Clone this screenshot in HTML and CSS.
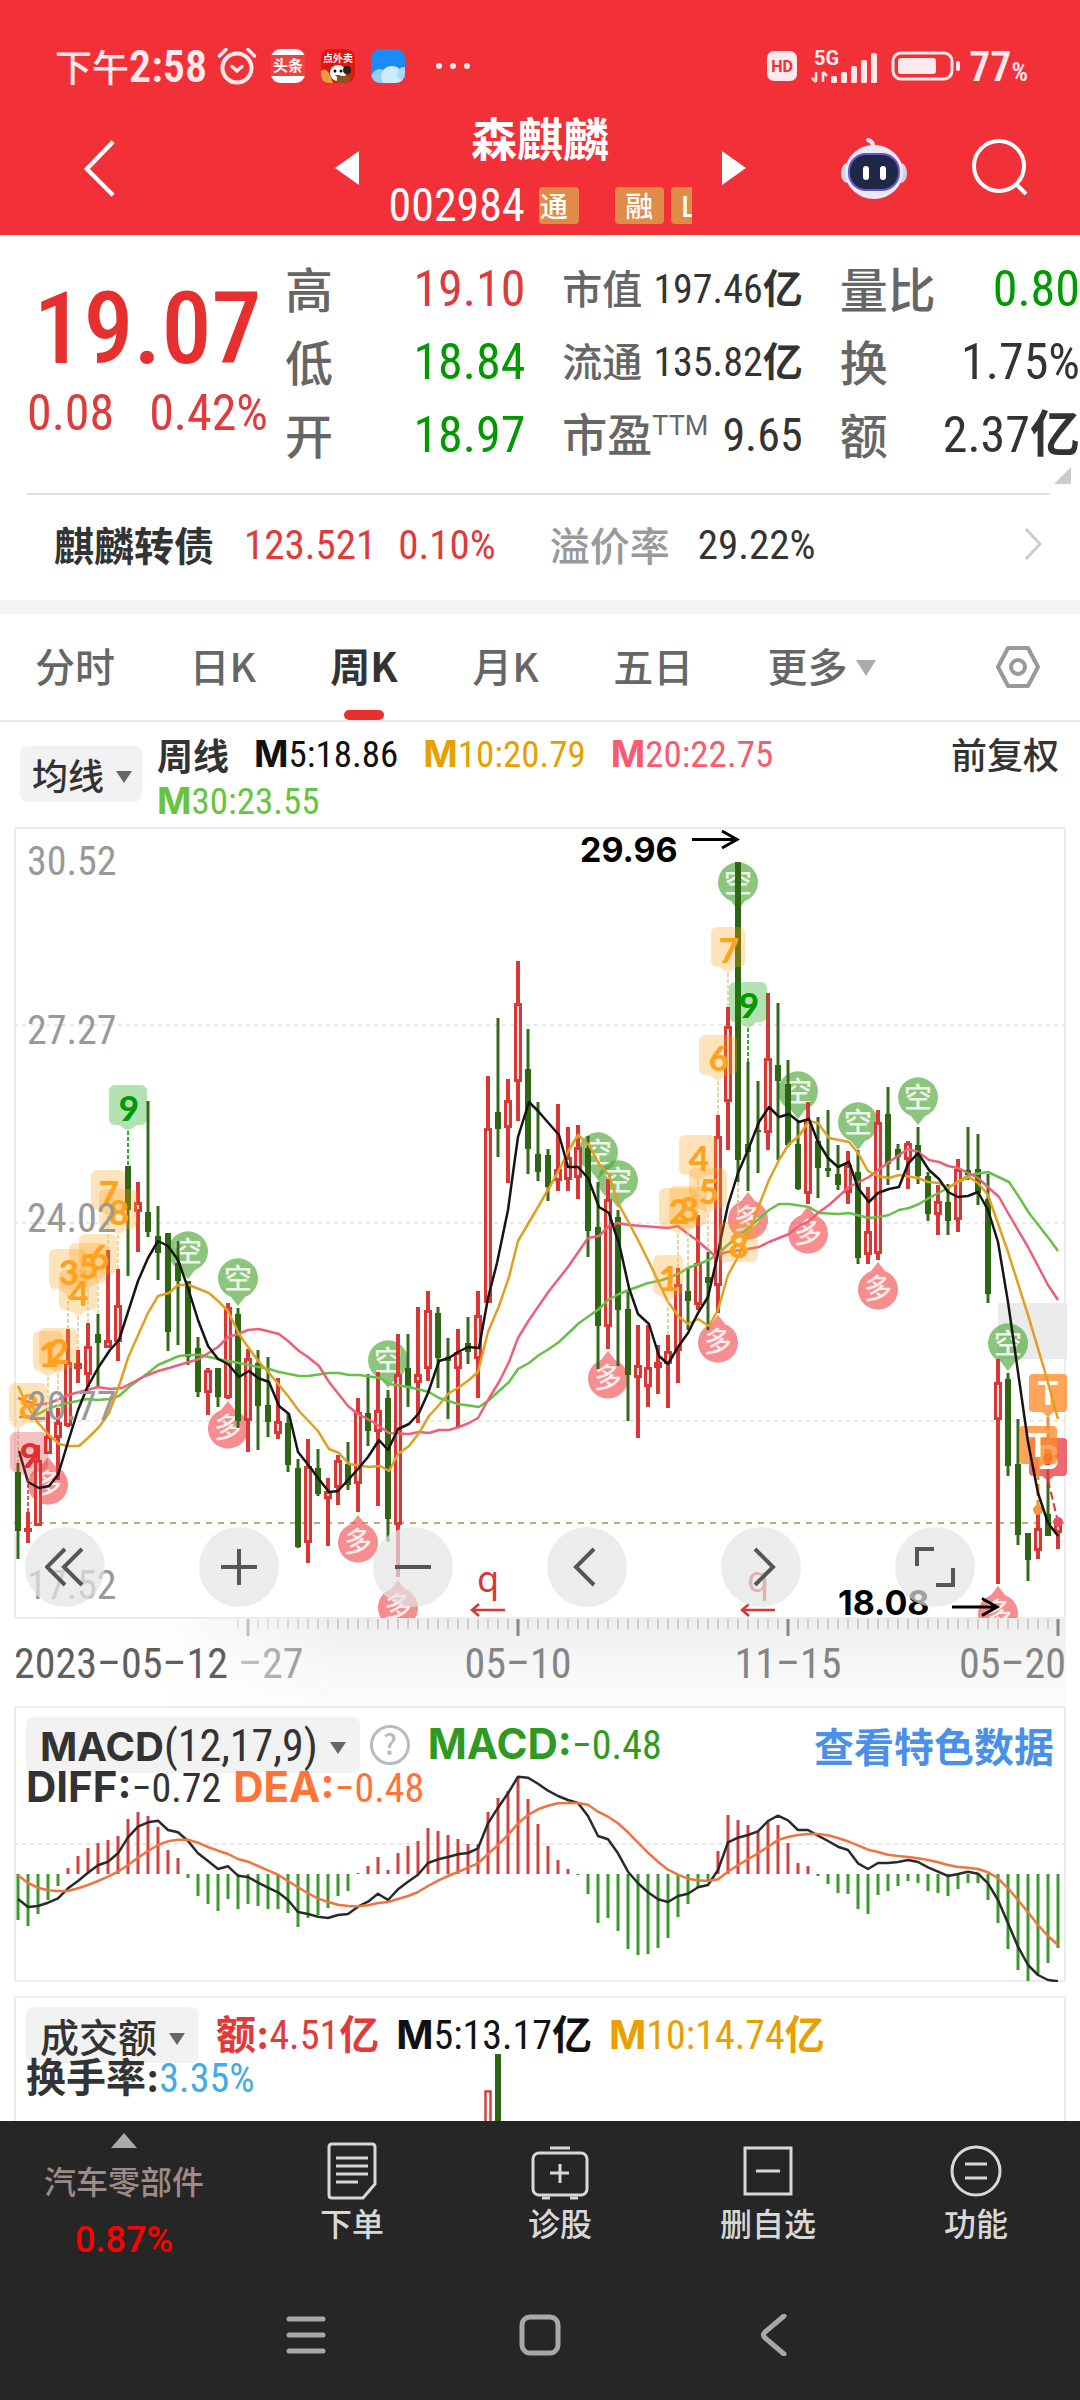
FILE: index.html
```html
<!DOCTYPE html>
<html lang="zh-CN">
<head>
<meta charset="utf-8">
<meta name="viewport" content="width=device-width, initial-scale=1">
<title>森麒麟 002984</title>
<link rel="stylesheet" href="styles.css">
</head>
<body>
<div class="app">
  <header class="top">
    <div class="status">
      <div class="status-side">
        <span class="clock">下午<span class="clock-num">2:58</span></span>
        <svg class="i40" viewBox="0 0 40 40" fill="none" stroke="#ffe9ea" stroke-width="4" stroke-linecap="round"><circle cx="20" cy="22" r="14.500"/><path d="M2.500 10 9 3.500M37.500 10 31 3.500" stroke-width="3.500"/><path d="M15 20.500l5 4.500 5-4.500" stroke-width="3.500"/></svg>
        <svg class="app-ico" viewBox="0 0 34 34"><rect width="34" height="34" rx="9" fill="#fff"/><rect y="6" width="34" height="21" fill="#f04142"/><text x="17" y="22" text-anchor="middle" font-size="15" font-weight="700" fill="#fff">头条</text></svg>
        <svg class="app-ico" viewBox="0 0 34 34"><rect width="34" height="34" rx="9" fill="#e3150f"/><text x="17" y="13" text-anchor="middle" font-size="10" font-weight="700" fill="#fff">点外卖</text><path d="M0 22q4-4 8 2l4 10H9q-9 0-9-9z" fill="#e0a23a"/><circle cx="17" cy="24" r="8" fill="#fff"/><circle cx="26" cy="21" r="4" fill="#222"/><circle cx="14" cy="22" r="1.500"/><circle cx="20" cy="22" r="1.500"/><path d="M14 26q3 4 6 0z" fill="#c33"/><path d="M16 27h14v2q-2 5-7 5h-7z" fill="#8a5220"/></svg>
        <svg class="app-ico" viewBox="0 0 34 34"><defs><clipPath id="wclip"><rect width="34" height="34" rx="9"/></clipPath></defs><g clip-path="url(#wclip)"><rect width="34" height="34" fill="#1b8cf7"/><circle cx="9" cy="29" r="9" fill="#8fd0fb"/><circle cx="21" cy="28" r="11" fill="#cfeafd"/><circle cx="33" cy="25" r="7" fill="#a9dafb"/></g></svg>
        <svg class="i40" viewBox="0 0 40 40" fill="#ffe9ea"><circle cx="6" cy="20" r="3"/><circle cx="20" cy="20" r="3"/><circle cx="34" cy="20" r="3"/></svg>
      </div>
      <div class="status-side status-right">
        <svg class="hd" viewBox="0 0 30 30"><rect width="30" height="30" rx="7" fill="#ffe9ea"/><text x="15" y="21" text-anchor="middle" font-size="16" font-weight="700" fill="#f23038" font-family="Roboto">HD</text></svg>
        <svg class="signal" viewBox="0 0 66 36" fill="#ffe9ea"><text x="3" y="17" font-size="20" font-family="Roboto" font-weight="700">5G</text><path d="M5 24v10M5 34l-4-4M12 34V24M12 24l4 4" stroke="#ffe9ea" stroke-width="2.500" fill="none"/><rect x="20" y="28" width="6" height="7" rx="1.500"/><rect x="30" y="24" width="6" height="11" rx="1.500"/><rect x="40" y="18" width="6" height="17" rx="1.500"/><rect x="50" y="12" width="6" height="23" rx="1.500"/><rect x="60" y="5" width="6" height="30" rx="1.500"/></svg>
        <svg class="battery" viewBox="0 0 70 30"><rect x="2" y="2" width="59" height="26" rx="8" fill="none" stroke="#ffe9ea" stroke-width="3"/><rect x="7" y="7" width="38" height="16" rx="3" fill="#ffe9ea"/><rect x="65" y="10" width="4" height="10" rx="2" fill="#ffe9ea"/></svg>
        <span class="pct">77<small>%</small></span>
      </div>
    </div>
    <nav class="titlebar" aria-label="个股">
      <button class="ico-btn back" aria-label="返回"><svg viewBox="0 0 60 64"><path d="M44 4 16 33l28 28" fill="none" stroke="#fff" stroke-width="4.500"/></svg></button>
      <div class="switcher">
        <button class="ico-btn tri-btn" aria-label="上一只"><svg viewBox="0 0 24 34"><path d="M24 0v34L0 17z" fill="#fff"/></svg></button>
        <div class="title">
          <h1>森麒麟</h1>
          <div class="code">002984<span class="tags"><i class="tag t1">通</i><i class="tag">融</i><i class="tag t3">L</i></span></div>
        </div>
        <button class="ico-btn tri-btn" aria-label="下一只"><svg viewBox="0 0 24 34"><path d="M0 0v34l24-17z" fill="#fff"/></svg></button>
      </div>
      <div class="title-right">
        <button class="ico-btn robot" aria-label="智能助手"><svg viewBox="0 0 66 64"><path d="M32 12q1-6-5-8" fill="none" stroke="#e6dcf5" stroke-width="4" stroke-linecap="round"/><ellipse cx="6" cy="37" rx="6" ry="10" fill="#cfd2ee"/><ellipse cx="60" cy="37" rx="6" ry="10" fill="#cfd2ee"/><ellipse cx="33" cy="36" rx="29" ry="27" fill="#e9ebf9"/><rect x="8" y="18" width="50" height="36" rx="17" fill="#20284a" stroke="#6d55c8" stroke-width="2"/><rect x="22" y="30" width="6" height="14" rx="3" fill="#fff"/><rect x="39" y="30" width="6" height="14" rx="3" fill="#fff"/></svg></button>
        <button class="ico-btn search" aria-label="搜索"><svg viewBox="0 0 60 60"><circle cx="29" cy="28" r="25" fill="none" stroke="#fff" stroke-width="4"/><path d="M46 46l10 10" stroke="#fff" stroke-width="4"/></svg></button>
      </div>
    </nav>
  </header>

  <main class="content">
    <section class="quote">
      <div class="price">
        <strong>19.07</strong>
        <span>0.08</span><span>0.42%</span>
      </div>
      <dl class="stats">
        <div><dt>高</dt><dd class="red">19.10</dd></div>
        <div class="mid"><dt>市值</dt><dd>197.46<b>亿</b></dd></div>
        <div><dt>量比</dt><dd class="green">0.80</dd></div>
        <div><dt>低</dt><dd class="green">18.84</dd></div>
        <div class="mid"><dt>流通</dt><dd>135.82<b>亿</b></dd></div>
        <div><dt>换</dt><dd>1.75%</dd></div>
        <div><dt>开</dt><dd class="green">18.97</dd></div>
        <div class="mid pe"><dt>市盈<sup>TTM</sup></dt><dd>9.65</dd></div>
        <div><dt>额</dt><dd>2.37<b>亿</b></dd></div>
      </dl>
      <i class="corner"></i>
    </section>
    <a class="bond" href="#bond">
      <b>麒麟转债</b><span class="n red">123.521</span><span class="n red">0.10%</span><span class="gray">溢价率</span><span class="n">29.22%</span>
      <svg class="chev" viewBox="0 0 18 34"><path d="M2 2l14 15L2 32" fill="none" stroke="#ccc" stroke-width="3"/></svg>
    </a>

    <nav class="tabs" aria-label="周期">
      <button>分时</button><button>日K</button><button class="on">周K</button><button>月K</button><button>五日</button><button class="more">更多<i class="down"></i></button>
      <button class="gear" aria-label="设置"><svg viewBox="0 0 44 42" fill="none" stroke="#999" stroke-width="4" stroke-linejoin="round"><path d="M12 2h20l10 19-10 19H12L2 21z"/><circle cx="22" cy="21" r="7"/></svg></button>
    </nav>

    <div class="ma">
      <button class="pick">均线<i class="down dark"></i></button>
      <p class="ma-list"><b class="lbl">周线</b><span class="k"><b>M</b>5:18.86</span><span class="o"><b>M</b>10:20.79</span><span class="p"><b>M</b>20:22.75</span><span class="g"><b>M</b>30:23.55</span></p>
      <button class="adj">前复权</button>
    </div>

    <section class="kline">
      <svg id="kline" viewBox="0 826 1080 880" role="img" aria-label="周K线图"></svg>
      <div class="tools">
        <button aria-label="最左"><svg viewBox="0 0 40 40"><path d="M20 2 2 20l18 18M37 2 19 20l18 18"/></svg></button>
        <button aria-label="放大"><svg viewBox="0 0 40 40"><path d="M2 20h36M20 2v36"/></svg></button>
        <button aria-label="缩小"><svg viewBox="0 0 40 40"><path d="M2 20h36"/></svg></button>
        <button aria-label="左移"><svg viewBox="0 0 40 40"><path d="M27 2 9 20l18 18"/></svg></button>
        <button aria-label="右移"><svg viewBox="0 0 40 40"><path d="M14 2l18 18-18 18"/></svg></button>
        <button aria-label="全屏"><svg viewBox="0 0 40 40"><path d="M2 19V2h17M38 21v17H21"/></svg></button>
      </div>
    </section>

    <section class="panel macd">
      <svg id="macd" viewBox="14 1706 1052 276" role="img" aria-label="MACD"></svg>
      <div class="legend">
        <button class="pick"><b>MACD</b><span class="n param">(12,17,9)</span><i class="down dark"></i></button>
        <svg class="help" viewBox="0 0 40 40"><circle cx="20" cy="20" r="18.500" fill="none" stroke="#bbb" stroke-width="3"/><text x="20" y="30" font-size="28" text-anchor="middle" fill="#bbb">?</text></svg>
        <span class="g2 n"><b>MACD:</b>−0.48</span>
        <a class="link" href="#data">查看特色数据</a>
      </div>
      <div class="legend second"><span class="n"><b>DIFF:</b>−0.72</span><span class="dea n"><b>DEA:</b>−0.48</span></div>
    </section>

    <section class="panel volume">
      <svg id="volume" viewBox="14 1996 1052 125" role="img" aria-label="成交额"></svg>
      <div class="legend vol">
        <button class="pick">成交额<i class="down dark"></i></button>
        <span class="n red"><b>额:</b>4.51<b>亿</b></span><span class="n k"><b>M</b>5:13.17<b>亿</b></span><span class="n o"><b>M</b>10:14.74<b>亿</b></span>
      </div>
      <div class="legend second"><span class="n"><b>换手率:</b><span class="blue">3.35%</span></span></div>
    </section>
  </main>

  <footer class="bottom">
    <nav class="actions" aria-label="操作">
      <a class="sector" href="#sector"><i class="up"></i><span>汽车零部件</span><em>0.87%</em></a>
      <button><svg viewBox="0 0 60 60"><path d="M10 3h40q3 0 3 3v37L41 57H10q-3 0-3-3V6q0-3 3-3z"/><path d="M14 17h32M14 25h32M14 33h32M14 41h22"/></svg>下单</button>
      <button><svg viewBox="0 0 60 60"><rect x="3" y="12" width="54" height="42" rx="6"/><path d="M20 7h20M30 23v19M20 32h19M12 57h8M40 57h8"/></svg>诊股</button>
      <button><svg viewBox="0 0 60 60"><rect x="7" y="7" width="46" height="46"/><path d="M18 30h24"/></svg>删自选</button>
      <button><svg viewBox="0 0 60 60"><circle cx="30" cy="30" r="24"/><path d="M19 23h22M19 37h22"/></svg>功能</button>
    </nav>
    <nav class="sysnav" aria-label="系统导航">
      <button aria-label="最近任务"><svg viewBox="0 0 42 42"><path d="M4 5h34M4 21h34M4 37h34"/></svg></button>
      <button aria-label="主屏幕"><svg viewBox="0 0 42 42"><rect x="3" y="3" width="36" height="36" rx="8"/></svg></button>
      <button aria-label="返回"><svg viewBox="0 0 42 42"><path d="M31 2 12 18q-3 3 0 6l19 16"/></svg></button>
    </nav>
  </footer>
</div>
<script src="chart.js"></script>
</body>
</html>
```
FILE: styles.css
```css
* { box-sizing: border-box; }
body { margin: 0; background: #fff; color: #333; font-family: "Noto Sans CJK SC", sans-serif; }
button { border: 0; padding: 0; margin: 0; background: none; color: inherit; font: inherit; cursor: pointer; white-space: nowrap; }
a { color: inherit; text-decoration: none; }
svg { display: block; flex: none; }
i, em { font-style: normal; }
p, h1, dl, dd { margin: 0; }
.app { display: flex; flex-direction: column; height: 100vh; }
.n { font-family: "Roboto Condensed", "Noto Sans CJK SC", sans-serif; font-size: 40px; }
.red { color: #e03a3a; }
.green { color: #009a00; }
.k { color: #111; }
.o { color: #e8a000; }
.p { color: #fa5a70; }
.g { color: #66c43e; }
.g2 { color: #2f9a20; }
.blue { color: #44aae8; }
.gray { color: #999; font-weight: 500; }

/* red header */
.top { background: #f23038; color: #fff; height: 235px; flex: none; }
.status { display: flex; justify-content: space-between; align-items: center; padding: 46px 52px 0 55px; height: 86px; color: #ffe9ea; }
.status-side { display: flex; align-items: center; gap: 16px; }
.status-right { gap: 14px; }
.clock { font-size: 37px; font-weight: 500; margin-right: -4px; }
.clock-num { font-family: "Roboto Condensed", sans-serif; font-size: 44px; font-weight: 600; }
.i40 { width: 40px; height: 40px; margin: 0 -2px; }
.app-ico { width: 34px; height: 34px; }
.status-side .i40:last-child { margin-left: 12px; }
.hd { width: 30px; height: 30px; }
.signal { width: 66px; height: 36px; }
.battery { width: 70px; height: 30px; }
.pct { font-family: "Roboto Condensed", sans-serif; font-size: 42px; font-weight: 600; margin-left: -6px; }
.pct small { font-size: 26px; }
.titlebar { display: grid; grid-template-columns: 1fr auto 1fr; align-items: center; height: 149px; padding: 12px 50px 0; }
.ico-btn svg { width: 60px; height: 60px; }
.tri-btn svg { width: 24px; height: 34px; }
.back { justify-self: start; margin-left: 20px; }
.switcher { display: flex; align-items: center; }
.title { width: 303px; margin: 10px 30px 0; text-align: center; }
.title h1 { font-size: 46px; line-height: 56px; font-weight: 700; }
.code { display: flex; align-items: center; margin-top: 8px; font-family: "Roboto Condensed", sans-serif; font-size: 46px; line-height: 56px; height: 66px; }
.tags { display: flex; overflow: hidden; margin-left: 14px; flex: 1; }
.tag { flex: none; background: #e08c48; border-radius: 4px; width: 49px; margin-right: 7px; height: 37px; line-height: 36px; font-size: 28px; font-family: "Noto Sans CJK SC", sans-serif; font-weight: 500; text-align: center; }
.t1 { width: 40px; margin-right: 36px; padding-right: 10px; }
.t3 { margin: 0; text-align: left; padding-left: 10px; }
.title-right { display: flex; align-items: center; justify-self: end; gap: 63px; }
.robot svg { width: 66px; height: 64px; }

/* quote */
.quote { display: flex; padding: 18px 0 0; height: 258px; position: relative; }
.price { width: 285px; flex: none; color: #e63030; padding: 14px 17px 0 27px; display: flex; flex-wrap: wrap; justify-content: space-between; align-content: flex-start; font-family: "Roboto Condensed", sans-serif; }
.price strong { width: 100%; font-size: 100px; line-height: 124px; font-weight: 500; text-align: center; }
.price span { font-size: 50px; line-height: 44px; color: #e03a3a; }
.stats { flex: 1; display: grid; grid-template-columns: repeat(3, 1fr); column-gap: 37px; grid-auto-rows: 73px; }
.stats div { display: flex; justify-content: space-between; align-items: center; line-height: 73px; white-space: nowrap; }
.stats dt { font-size: 48px; line-height: 70px; padding-bottom: 5px; font-weight: 500; color: #666; }
.stats dd { font-family: "Roboto Condensed", "Noto Sans CJK SC", sans-serif; font-size: 50px; }
.stats .mid dt, .stats .mid dd { font-size: 40px; }
.stats .pe dt { font-size: 45px; display: flex; }
.stats .pe dd { font-size: 46px; }
.stats sup { font: 27px/56px "Roboto", sans-serif; }
.corner { position: absolute; right: 9px; bottom: 9px; border-left: 17px solid transparent; border-bottom: 17px solid #ccc; }
.bond { display: flex; align-items: center; height: 107px; margin: 0 30px 0 27px; padding: 0 8px 8px 27px; border-top: 2px solid #e2e2e2; font-size: 40px; }
.bond b { font-weight: 700; margin-right: 30px; }
.bond .n { margin-right: 22px; padding-top: 3px; font-size: 41px; }
.bond .gray { margin: 0 28px 0 32px; }
.chev { width: 18px; height: 34px; margin-left: auto; }

/* period tabs */
.tabs { display: flex; justify-content: space-between; align-items: center; border-top: 14px solid #f4f4f4; border-bottom: 2px solid #e6e6e6; height: 122px; padding: 0 40px 0 35px; font-size: 40px; font-weight: 500; color: #666; }
.tabs button { height: 106px; padding-bottom: 4px; position: relative; }
.tabs .on { color: #333; font-weight: 700; }
.tabs .on::after { content: ""; position: absolute; left: 50%; bottom: 0; width: 40px; height: 10px; margin-left: -20px; border-radius: 5px; background: #e63030; }
.down { display: inline-block; border: 10px solid transparent; border-bottom: 0; border-top: 16px solid #aaa; margin-left: 8px; vertical-align: 6px; }
.down.dark { border-width: 12px 8px 0; border-top-color: #666; margin-left: 12px; vertical-align: 7px; }
.more { margin-right: 46px; }
.tabs .gear { padding: 0; }
.gear svg { width: 44px; height: 42px; }

/* moving averages */
.pick { background: #f2f2f2; border-radius: 8px; height: 56px; line-height: 52px; padding: 0 12px; }
.ma { display: flex; align-items: flex-start; height: 104px; padding: 9px 21px 0 20px; font-size: 36px; font-weight: 500; }
.ma .pick { margin-top: 15px; padding: 0 10px 0 12px; }
.ma-list { flex: 1; display: flex; flex-wrap: wrap; column-gap: 25px; padding-left: 15px; font: 37px/46px "Roboto Condensed", sans-serif; }
.ma-list b { font: 700 37px/46px Inter, sans-serif; }
.ma-list .lbl { font: 700 36px/46px "Noto Sans CJK SC", sans-serif; }
.adj { line-height: 44px; color: #333; }

/* candlestick chart */
.kline { position: relative; }
.kline > svg { width: 100%; height: auto; }
.tools { position: absolute; left: 25px; right: 105px; bottom: 99px; display: flex; justify-content: space-between; }
.tools button { width: 80px; height: 80px; border-radius: 50%; background: rgba(228, 228, 228, .7); display: grid; place-items: center; }
.tools svg { width: 40px; height: 40px; fill: none; stroke: #555; stroke-width: 4; }

/* indicator panels */
.panel { margin: 0 14px 14px; border: 2px solid #ececec; display: grid; grid-template-rows: 54px 1fr; height: 276px; padding: 9px 10px 0; position: relative; }
.panel > svg { position: absolute; left: -2px; top: -2px; width: calc(100% + 4px); height: auto; }
.legend { display: flex; align-items: center; position: relative; font-size: 39px; font-weight: 500; height: 56px; line-height: 52px; white-space: nowrap; }
.legend .n { font-weight: 400; }
.legend .n b, .legend .pick b { font-family: Inter, "Noto Sans CJK SC", sans-serif; font-weight: 700; font-size: 40px; }
.legend .pick { padding: 0 14px; }
.legend .param { font-size: 44px; }
.macd .n b, .macd .legend .n b { font-size: 42px; }
.legend.second { height: 40px; line-height: 40px; gap: 12px; margin-top: -3px; }
.help { width: 40px; height: 40px; margin: 0 18px 0 10px; }
.link { margin-left: auto; color: #4a90e8; font-size: 40px; font-weight: 700; }
.dea { color: #ff7338; }
.volume { margin-bottom: 0; height: 140px; }
.vol > span { margin-left: 17px; }

/* bottom */
.content { flex: 1; min-height: 0; overflow: hidden; }
.bottom { flex: none; background: #262626; height: 279px; position: relative; }
.actions { display: grid; grid-template-columns: 248px repeat(4, 1fr); height: 149px; }
.actions button { display: flex; flex-direction: column; align-items: center; color: #d8d8d8; font-size: 32px; line-height: 42px; font-weight: 500; padding-top: 20px; }
.actions svg { width: 60px; height: 60px; fill: none; stroke: #d8d8d8; stroke-width: 3; }
.sector { display: flex; flex-direction: column; align-items: center; padding-top: 12px; font-size: 32px; line-height: 44px; color: #a08a86; font-weight: 500; }
.sector em { color: #f00; font-size: 36px; font-family: "Roboto", sans-serif; margin-top: 16px; }
.sector span { margin-top: 10px; }
.up { border: 13px solid transparent; border-top: 0; border-bottom: 15px solid #aaa; }
.sysnav { display: flex; justify-content: space-between; width: 510px; margin: 44px auto 0; }
.sysnav svg { width: 42px; height: 42px; fill: none; stroke: #a8a8a8; stroke-width: 5; stroke-linecap: round; }
```
FILE: chart.js
```js
// Weekly candles: [direction (1 up, 0 down), high, body top, body bottom, low], in chart units.
const candles = [
[0,1463,1472,1531,1559],[1,1512,1528,1530,1543],[1,1445,1460,1526,1526],[1,1411,1436,1454,1454],[1,1408,1422,1438,1480],
[1,1329,1362,1426,1427],[1,1350,1363,1369,1383],[1,1323,1346,1375,1387],[0,1314,1334,1343,1387],[1,1250,1340,1348,1348],
[1,1269,1305,1342,1361],[0,1166,1166,1210,1276],[1,1182,1202,1212,1252],[0,1101,1212,1232,1237],[0,1206,1236,1253,1280],
[0,1233,1233,1332,1351],[0,1241,1263,1281,1345],[0,1281,1281,1357,1365],[0,1337,1348,1392,1397],[1,1368,1370,1393,1415],
[0,1368,1368,1397,1407],[1,1303,1307,1398,1399],[0,1308,1314,1421,1428],[1,1349,1358,1421,1452],[0,1350,1363,1406,1450],
[0,1357,1405,1422,1437],[1,1378,1421,1434,1439],[0,1413,1423,1465,1472],[0,1459,1468,1547,1548],[1,1439,1466,1543,1563],
[0,1449,1468,1494,1496],[1,1478,1491,1499,1546],[1,1455,1460,1488,1505],[0,1442,1464,1485,1490],[1,1398,1412,1484,1512],
[0,1374,1413,1431,1446],[1,1372,1410,1432,1506],[0,1390,1398,1519,1542],[1,1334,1374,1525,1577],[0,1334,1368,1386,1407],
[1,1307,1374,1383,1423],[1,1291,1310,1369,1381],[0,1307,1313,1358,1388],[0,1338,1357,1361,1419],[1,1329,1352,1369,1427],
[0,1317,1343,1352,1364],[1,1291,1315,1359,1398],[1,1076,1128,1303,1303],[0,1018,1112,1129,1157],[1,1079,1100,1128,1183],
[1,961,1003,1082,1121],[0,1029,1069,1149,1174],[0,1102,1154,1172,1181],[0,1149,1155,1187,1201],[1,1104,1169,1181,1191],
[1,1127,1157,1180,1191],[1,1125,1147,1178,1199],[0,1136,1148,1231,1257],[0,1182,1227,1326,1369],[1,1179,1199,1327,1349],
[0,1210,1217,1310,1366],[0,1292,1309,1375,1421],[1,1325,1365,1378,1438],[1,1325,1367,1387,1407],[1,1345,1362,1368,1394],
[1,1335,1351,1364,1408],[1,1268,1284,1351,1383],[0,1267,1291,1301,1330],[1,1215,1263,1305,1310],[0,1252,1277,1283,1330],
[1,1115,1136,1286,1313],[1,1007,1026,1102,1150],[0,862,862,1160,1182],[0,1062,1144,1152,1191],[0,1081,1130,1132,1173],
[1,993,1058,1133,1150],[0,1003,1065,1081,1160],[0,1060,1084,1145,1147],[0,1120,1144,1189,1190],[1,1102,1121,1194,1204],
[0,1117,1141,1168,1198],[0,1110,1168,1171,1177],[0,1145,1174,1185,1190],[1,1151,1165,1193,1204],[0,1150,1172,1258,1264],
[1,1187,1231,1255,1264],[1,1110,1122,1254,1260],[0,1087,1114,1164,1185],[0,1144,1149,1157,1170],[1,1141,1143,1160,1189],
[0,1127,1145,1176,1184],[0,1172,1176,1214,1221],[1,1185,1201,1215,1235],[0,1184,1202,1221,1235],[1,1159,1169,1220,1232],
[0,1127,1170,1175,1180],[0,1134,1169,1193,1205],[0,1174,1199,1294,1303],[1,1359,1382,1420,1584],[0,1373,1379,1466,1476],
[0,1419,1464,1535,1545],[0,1533,1533,1560,1581],[1,1511,1528,1551,1559],[0,1459,1514,1536,1536],[1,1521,1523,1533,1549]];

const averages = [
['#66c04a','19,1417 33,1417 49,1408 68,1403 87,1399 99,1400 109,1399 119,1396 129,1387 148,1373 158,1365 179,1356 189,1355 200,1355 218,1359 239,1363 269,1369 279,1372 299,1376 308,1376 329,1373 339,1373 349,1375 359,1375 380,1378 389,1384 409,1387 429,1392 439,1398 458,1404 479,1407 489,1400 509,1382 518,1369 529,1363 539,1355 549,1349 559,1342 579,1323 599,1309 608,1300 619,1294 629,1290 648,1283 659,1281 668,1278 678,1274 688,1268 709,1260 720,1252 730,1243 742,1233 759,1219 769,1210 779,1204 789,1204 809,1207 819,1213 839,1214 849,1213 869,1218 878,1217 889,1215 899,1210 909,1208 919,1204 929,1198 948,1188 969,1175 988,1172 1009,1182 1019,1197 1029,1213 1050,1240 1058,1251'],
['#ec6078','18,1398 37,1405 50,1403 68,1395 98,1387 110,1389 122,1388 143,1377 158,1371 169,1368 199,1359 218,1347 228,1337 238,1334 248,1330 259,1329 279,1334 288,1341 299,1351 308,1357 319,1366 329,1382 348,1406 358,1414 373,1422 389,1433 409,1434 419,1432 429,1433 439,1430 449,1430 459,1427 469,1423 478,1418 488,1400 499,1382 509,1362 518,1338 529,1320 549,1291 568,1267 588,1238 599,1236 609,1226 618,1223 629,1225 668,1228 678,1226 688,1234 698,1241 715,1256 727,1252 748,1249 759,1247 769,1242 779,1238 789,1234 800,1225 808,1222 818,1213 829,1205 849,1187 869,1177 889,1162 908,1149 918,1152 929,1160 939,1162 948,1166 958,1168 978,1178 999,1197 1008,1213 1028,1247 1048,1285 1058,1300'],
['#e0a020','18,1386 28,1407 38,1423 49,1435 59,1444 68,1446 79,1446 88,1438 99,1427 109,1413 115,1397 120,1383 128,1358 139,1333 148,1313 158,1296 169,1293 178,1285 189,1285 199,1289 209,1293 218,1301 228,1311 239,1334 248,1347 259,1362 270,1374 279,1385 288,1396 299,1411 318,1431 329,1449 339,1453 349,1464 369,1467 380,1466 389,1471 398,1454 409,1446 419,1433 429,1416 439,1405 449,1393 458,1388 469,1380 478,1372 488,1332 499,1306 509,1277 518,1241 538,1207 549,1188 559,1170 569,1150 578,1135 589,1145 599,1164 609,1175 618,1203 629,1223 639,1242 649,1262 668,1302 679,1317 688,1324 698,1319 709,1326 718,1310 728,1275 738,1257 753,1223 758,1208 769,1180 779,1160 789,1144 799,1136 809,1121 818,1123 829,1138 849,1142 858,1153 868,1171 878,1176 889,1178 899,1175 918,1178 928,1182 939,1183 948,1188 958,1182 969,1177 978,1183 988,1195 995,1215 1008,1252 1028,1315 1045,1372 1058,1419'],
['#151515','19,1451 28,1482 39,1488 49,1486 58,1475 68,1442 78,1410 87,1388 98,1368 110,1350 119,1340 128,1312 138,1281 148,1258 158,1241 168,1246 178,1260 188,1288 198,1320 208,1346 218,1359 228,1364 239,1377 249,1371 258,1378 269,1382 279,1406 289,1414 298,1452 310,1467 318,1478 329,1492 338,1491 348,1480 358,1469 368,1457 379,1440 388,1450 398,1429 409,1424 419,1413 428,1393 439,1361 449,1358 458,1352 468,1347 479,1348 488,1298 497,1263 508,1210 513,1173 518,1137 529,1102 538,1111 559,1135 568,1167 578,1167 588,1178 599,1207 609,1213 615,1232 619,1243 629,1288 638,1314 649,1324 659,1356 668,1364 678,1347 688,1333 698,1313 708,1297 717,1258 722,1233 728,1205 738,1173 748,1150 759,1122 769,1107 779,1117 789,1114 799,1122 809,1119 818,1142 828,1158 838,1167 849,1162 858,1188 869,1202 878,1193 889,1189 899,1187 908,1164 918,1153 929,1170 939,1179 948,1192 958,1197 968,1196 978,1192 988,1210 998,1242 1008,1302 1018,1372 1028,1442 1038,1493 1048,1523 1058,1536']];

const shortPins = [[188,1252],[238,1279],[388,1361],[598,1153],[618,1181],[738,883],[798,1092],[858,1123],[918,1098],[1008,1344]];
const longPins = [[48,1484],[228,1428],[358,1542],[398,1607],[608,1378],[718,1342],[748,1219],[808,1233],[878,1289],[998,1613]];

// Sequence tags: [digit, week x, top, line end, colour, box centre]
const tags = [
['8',18,1383,1463,'o',28],['9',28,1432,1512,'r',29],['1',48,1331,1411,'o',48],['2',58,1328,1408,'o',58],['3',68,1249,1329,'o',68],
['4',78,1270,1350,'o',78],['5',88,1243,1323,'o',88],['6',98,1234,1314,'o',98],['7',108,1170,1250,'o',108],['8',118,1189,1269,'o',118],
['9',128,1085,1165,'g',128],['1',668,1255,1335,'o',668],['2',678,1188,1268,'o',678],['3',688,1186,1267,'o',688],['4',698,1135,1215,'o',698],
['5',708,1168,1252,'o',708],['6',718,1035,1115,'o',718],['7',728,927,1007,'o',728],['9',748,982,1062,'g',748]];
const tagFill = { o: '#ffa31f', g: '#009a00', r: '#e62c2c' };

const X = i => 18 + 10 * i;
const line = (x1, y1, x2, y2, c, w, extra = '') => `<line x1="${x1}" y1="${y1}" x2="${x2}" y2="${y2}" stroke="${c}" stroke-width="${w}" ${extra}/>`;
const text = (x, y, s, cls, anchor = 'start') => `<text x="${x}" y="${y}" class="${cls}" text-anchor="${anchor}">${s}</text>`;

let out = `<style>
.ax{font:40px "Roboto Condensed",sans-serif;fill:#999}
.date{fill:#858585;font-size:42px}.first{fill:#5f5f5f;font-size:42px}
.ext{font:700 34px Inter,sans-serif;fill:#000}
.pin{font:500 28px "Noto Sans CJK SC",sans-serif;fill:#fff;fill-opacity:.85}
.num{font:900 35px Lato,sans-serif}
.tb{font:700 34px Roboto,sans-serif;fill:#fff}
.q{font:36px "Noto Sans",sans-serif;fill:#d93636}</style>
<defs><clipPath id="plot"><rect x="0" y="826" width="1080" height="792"/></clipPath>
<linearGradient id="band" x2="0" y2="1"><stop stop-color="#eee"/><stop offset=".6" stop-color="#f8f8f8"/><stop offset="1" stop-color="#fcfcfc"/></linearGradient>
<linearGradient id="fade"><stop stop-color="#fff"/><stop offset=".45" stop-color="#fff" stop-opacity=".9"/><stop offset="1" stop-color="#fff" stop-opacity="0"/></linearGradient></defs>
<rect x="15" y="828" width="1050" height="790" fill="none" stroke="#ececec" stroke-width="2"/>`;

for (const y of [1025, 1223, 1421]) out += line(14, y, 1066, y, '#e8e8e8', 2, 'stroke-dasharray="4 4"');
out += `<rect x="998" y="1303" width="69" height="56" fill="#ebebeb"/>`;
out += line(14, 1523, 1066, 1523, '#c4a878', 2, 'stroke-dasharray="6 6"');

out += '<g clip-path="url(#plot)">';
const pin = (x, y, dir, color, ch) => `<path d="M${x - 7} ${y + 18 * dir}L${x} ${y + 27 * dir}L${x + 7} ${y + 18 * dir}A20 20 0 1 ${dir > 0 ? 0 : 1} ${x - 7} ${y + 18 * dir}z" fill="${color}" opacity=".65"/>` + text(x, y + 10, ch, 'pin', 'middle');
for (const [x, y] of shortPins) out += pin(x, y, 1, '#4ea639', '空');
for (const [x, y] of longPins) out += pin(x, y, -1, '#f15051', '多');

candles.forEach(([up, high, top, bottom, low], i) => {
  const x = X(i);
  if (up) {
    out += line(x, high, x, low, '#d93636', 4);
    out += `<rect x="${x - 2.5}" y="${top + 1.5}" width="5" height="${Math.max(bottom - top - 3, 1)}" fill="#fbe0e0" stroke="#d93636" stroke-width="3"/>`;
  } else {
    out += line(x, high, x, low, '#346a1c', 3);
    out += `<rect x="${x - 3}" y="${top}" width="6" height="${bottom - top}" fill="#2f6614"/>`;
  }
});

// Trade markers
const trade = (x, y, ch, color) => `<path d="M${x - 19} ${y + 4}q0-4 4-4h30q4 0 4 4v30q0 4-4 4h-9l-6 5-6-5h-9q-4 0-4-4z" fill="${color}" opacity=".78"/>` + text(x, y + 31, ch, 'tb', 'middle');
out += line(1048, 1480, 1058, 1522, '#d93636', 2, 'stroke-dasharray="8 4"') + '<circle cx="1058" cy="1522" r="5" fill="#e85060"/>';
out += trade(1048, 1438, 'B', '#ea4048');
out += line(1038, 1468, 1038, 1510, '#e8903a', 3, 'stroke-dasharray="12 4"') + '<circle cx="1038" cy="1510" r="5" fill="#ff9340"/>';
out += trade(1038, 1426, 'T', '#ff8a2a');
out += line(1048, 1417, 1048, 1458, '#e8903a', 3, 'stroke-dasharray="12 4"') + '<circle cx="1048" cy="1458" r="5" fill="#ff7a20"/>';
out += trade(1048, 1374, 'T', '#ff8a2a');

for (const [color, points] of averages) out += `<polyline points="${points}" fill="none" stroke="${color}" stroke-width="2.5" stroke-linejoin="round"/>`;

for (const [n, x, top, end, c, cx] of tags) {
  const half = n === '1' ? 15 : n === '7' ? 17 : 19;
  out += line(x, top + 46, x, end, c === 'o' ? '#e0cf90' : tagFill[c], 2, 'stroke-dasharray="4 2" opacity=".8"');
  out += `<rect x="${cx - half}" y="${top}" width="${2 * half}" height="40" rx="6" fill="${tagFill[c]}" opacity=".3"/>`;
  out += `<path d="M${x - 9} ${top + 40}h18l-9 6z" fill="${tagFill[c]}" opacity=".3"/>`;
  out += `<text x="${cx + 1}" y="${top + 36}" class="num" text-anchor="middle" fill="${tagFill[c]}">${n}</text>`;
}
out += `<rect x="719" y="1222" width="39" height="40" rx="6" fill="#ffa31f" opacity=".3"/><text x="739" y="1258" class="num" text-anchor="middle" fill="#ffa31f">8</text>` + line(738, 1182, 738, 1218, '#e0cf90', 2, 'stroke-dasharray="4 2"');

[['30.52', 875], ['27.27', 1044], ['24.02', 1232], ['20.77', 1420], ['17.52', 1599]].forEach(([s, y]) => out += text(27, y, s, 'ax'));
out += text(580, 862, '29.96', 'ext') + text(838, 1615, '18.08', 'ext');
out += '<path d="M692 839.5h44M722 831l15 8.500-15 8.500M952 1607h44M982 1598.500l15 8.500-15 8.500" fill="none" stroke="#000" stroke-width="3"/>';
for (const x of [488, 758]) out += text(x, 1592, 'q', 'q', 'middle') + `<path d="M${x + 17} 1610h-32M${x - 9} 1604l-7 6 7 6" fill="none" stroke="#d93636" stroke-width="2.500"/>`;
out += '</g>';

// Date axis
out += '<rect x="14" y="1619" width="1052" height="87" fill="url(#band)"/>';
for (let x = 238; x <= 1058; x += 10) out += (x - 248) % 270 === 0 ? line(x, 1619, x, 1636, '#888', 3) : line(x, 1619, x, 1629, '#aaa', 1);
out += text(238, 1678, '–27', 'ax date') + '<rect x="14" y="1619" width="330" height="87" fill="url(#fade)"/>';
out += text(14, 1678, '2023–05–12', 'ax first') + text(518, 1678, '05–10', 'ax date', 'middle') + text(788, 1678, '11–15', 'ax date', 'middle') + text(1066, 1678, '05–20', 'ax date', 'end');
document.getElementById('kline').innerHTML = out;

// MACD
const hist = [-46,-52,-40,-26,-12,6,18,26,31,34,38,55,62,58,47,24,16,-4,-22,-30,-37,-25,-35,-30,-32,-35,-35,-39,-53,-44,-41,-34,-22,-17,1,8,17,4,21,28,33,46,43,39,35,30,30,62,76,83,97,75,50,28,14,5,-1,-20,-49,-44,-57,-75,-81,-80,-74,-64,-43,-30,-14,-7,23,59,54,49,42,52,49,31,11,8,-2,-10,-19,-20,-35,-40,-21,-17,-12,-7,-9,-17,-19,-22,-15,-9,-9,-26,-49,-75,-96,-107,-100,-89,-74];
const diff = [597,621,618,608,595,565,543,518,496,485,460,412,380,367,362,390,397,423,460,483,507,499,527,531,548,563,577,600,636,642,650,654,645,642,620,605,581,600,568,545,524,489,478,471,463,459,445,370,323,280,230,233,251,272,288,300,309,348,408,418,460,515,550,577,598,606,588,581,562,555,510,427,413,405,394,363,347,361,390,390,407,423,440,450,490,507,489,489,486,480,486,502,515,528,522,515,521,550,600,670,740,795,825,840,844];
const dea = [526,549,563,571,573,573,565,555,543,530,515,495,473,453,435,424,419,419,428,441,452,462,477,485,498,511,524,543,562,580,595,606,614,618,619,616,609,606,597,588,576,558,542,528,516,503,490,462,435,405,370,345,328,317,310,309,309,314,335,350,370,397,428,458,485,509,524,536,541,543,538,515,495,478,460,440,420,411,405,402,402,406,414,424,436,449,456,464,468,471,475,480,487,495,501,503,507,517,535,565,600,637,675,708,735];
const curve = (values, c) => `<polyline points="${values.map((v, i) => `${X(i)},${(1700 + v / 3).toFixed(1)}`).join(' ')}" fill="none" stroke="${c}" stroke-width="2.5" stroke-linejoin="round"/>`;
let m = line(14, 1844, 1066, 1844, '#e8e8e8', 2, 'stroke-dasharray="4 4"');
hist.forEach((v, i) => m += line(X(i), 1874, X(i), 1874 - v, v > 0 ? '#d24040' : '#3a9a2c', 3));
document.getElementById('macd').innerHTML = m + curve(diff, '#2a2a2a') + curve(dea, '#ee7440');

// Turnover bars that reach into view
document.getElementById('volume').innerHTML = '<rect x="485.500" y="2091.500" width="5" height="40" fill="#fff" stroke="#d24040" stroke-width="2.500"/><rect x="495" y="2054" width="6" height="70" fill="#2f6614"/>';
```
